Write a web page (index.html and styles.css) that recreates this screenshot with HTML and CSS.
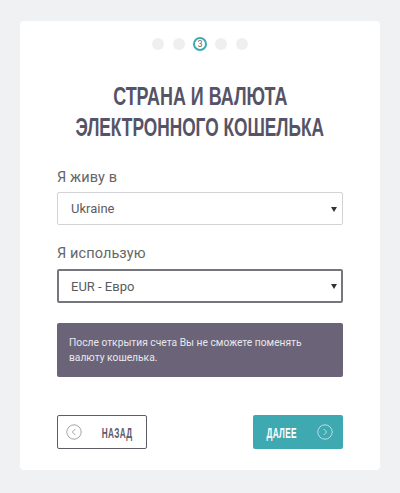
FILE: index.html
```html
<!DOCTYPE html>
<html lang="ru">
<head>
<meta charset="utf-8">
<title>Страна и валюта</title>
<link rel="stylesheet" href="styles.css">
</head>
<body>
<main class="card">
  <div class="steps">
    <span class="dot"></span>
    <span class="dot"></span>
    <span class="dot active">3</span>
    <span class="dot"></span>
    <span class="dot"></span>
  </div>
  <h1 class="title"><span class="line-one">СТРАНА И ВАЛЮТА</span><span class="line-two">ЭЛЕКТРОННОГО КОШЕЛЬКА</span></h1>
  <div class="field first">
    <label class="label">Я живу в</label>
    <div class="select-wrap"><select class="select"><option>Ukraine</option></select></div>
  </div>
  <div class="field second">
    <label class="label">Я использую</label>
    <div class="select-wrap"><select class="select focused"><option>EUR - Евро</option></select></div>
  </div>
  <p class="notice">После открытия счета Вы не сможете поменять валюту кошелька.</p>
  <div class="actions">
    <button class="btn back" type="button">
      <svg class="ico" viewBox="0 0 16 16"><circle cx="8" cy="8" r="7.2"/><path d="M9.3 5 6.3 8l3 3"/></svg>
      <span class="btn-text">НАЗАД</span>
    </button>
    <button class="btn next" type="button">
      <span class="btn-text">ДАЛЕЕ</span>
      <svg class="ico" viewBox="0 0 16 16"><circle cx="8" cy="8" r="7.2"/><path d="M6.7 5l3 3-3 3"/></svg>
    </button>
  </div>
</main>
</body>
</html>
```
FILE: styles.css
```css
* { box-sizing: border-box; }
html, body { margin: 0; height: 100%; }
body {
  background: #eff1f3;
  padding: 21px 20px 0;
  font-family: Roboto, "Liberation Sans", sans-serif;
  overflow: hidden;
}
.card {
  background: #fff;
  border-radius: 4px;
  height: 449px;
  padding: 16px 37px 0;
}
.steps {
  display: flex;
  justify-content: center;
  align-items: center;
  gap: 9px;
  height: 14px;
}
.dot {
  width: 12px;
  height: 12px;
  border-radius: 50%;
  background: #eeeff1;
}
.dot.active {
  width: 14px;
  height: 14px;
  margin: 0 -1px;
  background: #fff;
  border: 2px solid #3fa9b1;
  color: #6b6478;
  font-size: 9px;
  line-height: 10px;
  text-align: center;
}
.title {
  margin: 30px 0 0;
  display: flex;
  flex-direction: column;
  align-items: center;
  font-family: "Liberation Sans", sans-serif;
  font-weight: 700;
  font-size: 26px;
  line-height: 31px;
  color: #565367;
  white-space: nowrap;
}
.line-one { transform: scaleX(0.69); }
.line-two { transform: scaleX(0.665); }
.field.first { margin-top: 26px; }
.field.second { margin-top: 20px; }
.label {
  display: block;
  font-size: 14.5px;
  line-height: 18px;
  letter-spacing: 0.1px;
  color: #666;
  margin-bottom: 6px;
}
.first .label { margin-bottom: 5px; }
.select-wrap { position: relative; }
.select-wrap::after {
  content: "";
  position: absolute;
  right: 6px;
  top: 50%;
  margin-top: -2px;
  border-left: 3px solid transparent;
  border-right: 3px solid transparent;
  border-top: 5px solid #333;
}
.select {
  display: block;
  width: 100%;
  height: 33px;
  padding: 0 13px;
  appearance: none;
  background: #fff;
  border: 1px solid #d3d3d6;
  border-radius: 2px;
  font-family: Roboto, sans-serif;
  font-size: 13px;
  color: #5c5c5c;
  outline: none;
}
.select.focused {
  height: 34px;
  border: 2px solid #77757c;
  padding: 0 12px;
}
.notice {
  margin: 20px 0 0;
  height: 54px;
  padding: 12px 12px 0;
  background: #6b6478;
  border-radius: 2px;
  color: #e9e7ec;
  font-size: 10.25px;
  line-height: 15px;
}
.actions {
  display: flex;
  justify-content: space-between;
  margin-top: 38px;
}
.btn {
  display: flex;
  align-items: center;
  justify-content: space-between;
  width: 90px;
  height: 34px;
  border-radius: 2px;
  font-family: "Liberation Sans", sans-serif;
  font-weight: 700;
  font-size: 15px;
  letter-spacing: 0.6px;
}
.btn-text {
  display: inline-block;
  transform: scaleX(0.55);
}
.ico {
  width: 16px;
  height: 16px;
  fill: none;
  stroke: currentColor;
  stroke-width: 1;
  flex: none;
}
.back {
  background: #fff;
  border: 1px solid #5f5c66;
  color: #5f5c6c;
  padding: 0 1px 0 8px;
}
.back .ico { color: #a5a5a8; }
.next {
  background: #3fa9b1;
  border: 0;
  color: #fff;
  padding: 0 10px 0 1px;
}
.next .ico { color: #b6e0e3; }
```
